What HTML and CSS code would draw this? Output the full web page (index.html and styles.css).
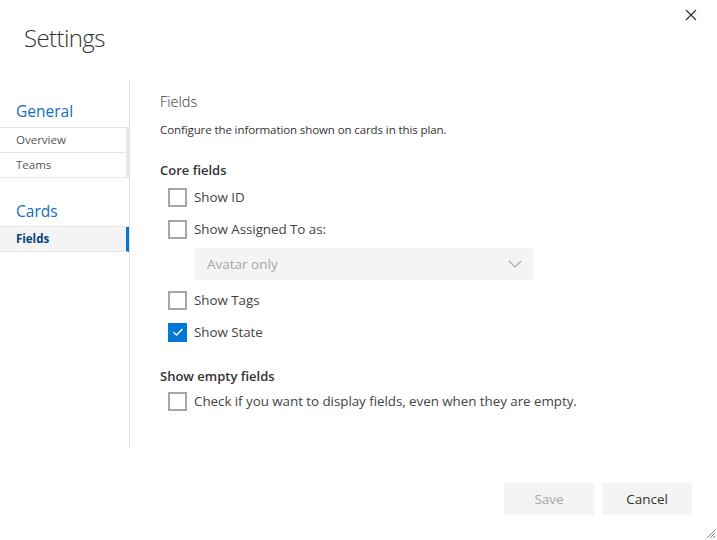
FILE: index.html
```html
<!DOCTYPE html>
<html>
<head>
<meta charset="utf-8">
<link rel="stylesheet" href="styles.css">
</head>
<body>
<div class="dialog">
  <header class="header">
    <h1 class="title">Settings</h1>
    <button class="close" aria-label="Close">
      <svg width="12" height="12" viewBox="0 0 12 12"><path d="M1 1L11 11M11 1L1 11" stroke="#333" stroke-width="1.2" fill="none"/></svg>
    </button>
  </header>
  <div class="main">
    <nav class="nav">
      <div class="nav-group">General</div>
      <ul class="nav-list">
        <li class="nav-item">Overview</li>
        <li class="nav-item">Teams</li>
      </ul>
      <div class="nav-group nav-group-2">Cards</div>
      <ul class="nav-list">
        <li class="nav-item selected">Fields</li>
      </ul>
    </nav>
    <section class="content">
      <h2 class="section-title">Fields</h2>
      <p class="desc">Configure the information shown on cards in this plan.</p>
      <h3 class="sub sub-1">Core fields</h3>
      <div class="row"><span class="box"></span><span>Show ID</span></div>
      <div class="row"><span class="box"></span><span>Show Assigned To as:</span></div>
      <div class="dropdown"><span>Avatar only</span>
        <svg width="14" height="8" viewBox="0 0 14 8"><path d="M1 1L7 7L13 1" stroke="#a6a6a6" stroke-width="1.1" fill="none"/></svg>
      </div>
      <div class="row"><span class="box"></span><span>Show Tags</span></div>
      <div class="row"><span class="box checked"><svg width="12" height="10" viewBox="0 0 12 10"><path d="M1.5 5.2L4.5 8L10.5 2" stroke="#fff" stroke-width="1.4" fill="none"/></svg></span><span>Show State</span></div>
      <h3 class="sub sub-2">Show empty fields</h3>
      <div class="row"><span class="box"></span><span>Check if you want to display fields, even when they are empty.</span></div>
    </section>
  </div>
  <footer class="footer">
    <button class="btn disabled">Save</button>
    <button class="btn">Cancel</button>
  </footer>
  <svg class="grip" width="12" height="12" viewBox="0 0 12 12"><path d="M11 3L3 11M11 6L6 11M11 9L9 11" stroke="#8a8a8a" stroke-width="1" fill="none"/></svg>
</div>
</body>
</html>
```
FILE: styles.css
```css
* { box-sizing: border-box; }
html, body { margin: 0; padding: 0; background: #fff; }
body { font-family: "Open Sans", "Noto Sans", sans-serif; color: #333; }
.dialog { position: relative; width: 717px; height: 540px; display: flex; flex-direction: column; }
.header { height: 80px; padding: 22px 24px 0; }
.title { margin: 0; font-size: 24px; font-weight: 300; line-height: 32px; color: #333; letter-spacing: -0.6px; }
.close { position: absolute; top: 8px; right: 19px; width: 14px; height: 14px; padding: 0; border: 0; background: none; display: flex; align-items: center; justify-content: center; }
.main { display: flex; height: 368px; }
.nav { width: 130px; border-right: 1px solid #e0e0e0; flex: none; }
.nav-group { font-size: 15.5px; line-height: 20px; padding: 21px 16px 6px; color: #106ebe; }
.nav-group-2 { padding-top: 23px; padding-bottom: 5px; }
.nav-list { list-style: none; margin: 0; padding: 0; border-top: 1px solid #e6e6e6; }
.nav-item { height: 25px; line-height: 24px; font-size: 11.5px; padding-left: 16px; border-bottom: 1px solid #e6e6e6; border-right: 3px solid #e8e8e8; color: #555; }
.nav-item.selected { background: #f4f4f4; border-right-color: #0078d4; font-weight: 700; color: #004578; }
.content { padding: 12px 0 0 30px; flex: 1; }
.section-title { margin: 0; font-size: 14.5px; font-weight: 300; line-height: 20px; color: #333; }
.desc { margin: 10px 0 0; font-size: 11.5px; line-height: 16px; color: #333; letter-spacing: -0.1px; }
.sub { margin: 0; font-size: 13px; font-weight: 600; line-height: 18px; color: #333; }
.sub-1 { margin: 23px 0 2px; }
.sub-2 { margin-top: 19px; }
.row { display: flex; align-items: center; height: 32px; padding-left: 8px; font-size: 13.4px; color: #444; letter-spacing: -0.05px; }
.row .box { width: 19px; height: 19px; border: 2px solid #a6a6a6; margin-right: 7px; flex: none; display: flex; align-items: center; justify-content: center; }
.row .box.checked { background: #0078d4; border-color: #0078d4; }
.dropdown { margin: 3px 0 4px 34px; width: 340px; height: 32px; background: #f4f4f4; display: flex; align-items: center; justify-content: space-between; padding: 0 12px 0 13px; font-size: 13.5px; color: #a6a6a6; }
.footer { flex: 1; display: flex; justify-content: flex-end; gap: 8px; padding: 35px 25px 0 0; }
.btn { width: 90px; height: 32px; border: 0; background: #f4f4f4; font-family: inherit; font-size: 13.5px; color: #333; }
.btn.disabled { color: #a6a6a6; }
.grip { position: absolute; right: 1px; bottom: 1px; }
```
